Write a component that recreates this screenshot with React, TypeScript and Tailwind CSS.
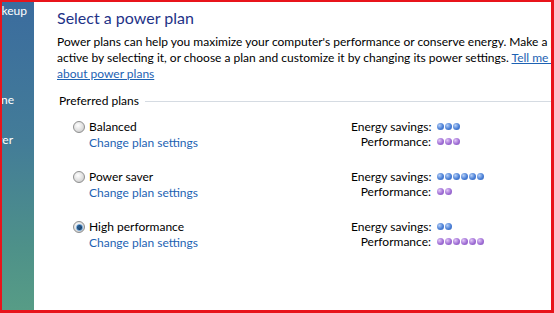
import React from 'react'

const font = { fontFamily: 'Lato, "Noto Sans", Arial, sans-serif' }

const plans = [
  { name: 'Balanced', energy: 3, perf: 3, selected: false },
  { name: 'Power saver', energy: 6, perf: 2, selected: false },
  { name: 'High performance', energy: 2, perf: 6, selected: true },
]

const Radio = ({ checked }: { checked: boolean }) => (
  <div className="w-[12px] h-[12px] rounded-full border border-[#8e8f8f] bg-[radial-gradient(circle_at_40%_35%,#ffffff,#dcdcdc_60%,#bdbdbd)] flex items-center justify-center shrink-0">
    {checked && (
      <div className="w-[7px] h-[7px] rounded-full border border-[#5b9ad6] bg-[radial-gradient(circle_at_40%_40%,#2c5f91,#0f2f52)]" />
    )}
  </div>
)

const Dots = ({ n, kind }: { n: number; kind: 'blue' | 'purple' }) => (
  <div className="flex gap-[1px] items-center ml-[6px]">
    {Array.from({ length: n }).map((_, i) => (
      <div
        key={i}
        className={
          kind === 'blue'
            ? 'w-[7px] h-[7px] rounded-full bg-[radial-gradient(circle_at_35%_35%,#b6d0f7,#4a7fd6_55%,#2f5fb5)]'
            : 'w-[7px] h-[7px] rounded-full bg-[radial-gradient(circle_at_35%_35%,#e2c8f7,#a06fd6_55%,#7c4cb5)]'
        }
      />
    ))}
  </div>
)

export default function App() {
  return (
    <div
      className="w-[554px] h-[313px] overflow-hidden flex bg-white border-[#e8141b] border-l-2 border-t-2 border-r-[3px] border-b-[3px] text-[12px] text-black"
      style={font}
    >
      {/* left task pane, mostly scrolled out of view */}
      <div className="w-[32px] shrink-0 h-full overflow-hidden bg-[linear-gradient(180deg,#3b6c9e_0%,#437c98_45%,#4e9189_80%,#579c86_100%)] text-white flex flex-col items-end">
        <div className="whitespace-nowrap mr-[7px] mt-[1px] leading-[16px]">Require a password on wakeup</div>
        <div className="whitespace-nowrap mr-[20px] mt-[73px] leading-[16px]">Change the time zone</div>
        <div className="whitespace-nowrap mr-[21px] mt-[24px] leading-[16px]">Battery power saver</div>
      </div>

      <div className="flex-1 min-w-0 pl-[23px] overflow-hidden">
        <h1 className="text-[16px] leading-[24px] text-[#1e3287] mt-[4px] whitespace-nowrap">Select a power plan</h1>
        <p className="mt-[4px] leading-[16px] whitespace-nowrap">
          Power plans can help you maximize your computer's performance or conserve energy. Make a plan
          <br />
          active by selecting it, or choose a plan and customize it by changing its power settings.{' '}
          <span className="text-[#1d62b3] underline">Tell me more</span>
          <br />
          <span className="text-[#1d62b3] underline">about power plans</span>
        </p>

        <div className="mt-[11px] ml-[2px] flex items-center gap-[6px] leading-[16px]">
          <span className="whitespace-nowrap">Preferred plans</span>
          <div className="flex-1 h-px bg-[#d5dbe2]" />
        </div>

        <div className="mt-[10px] ml-[16px] flex flex-col gap-[18px]">
          {plans.map((p) => (
            <div key={p.name} className="flex">
              <div className="w-[278px] shrink-0">
                <div className="flex items-center gap-[4px] leading-[16px]">
                  <Radio checked={p.selected} />
                  <span>{p.name}</span>
                </div>
                <div className="ml-[16px] leading-[16px] text-[#1d62b3]">Change plan settings</div>
              </div>
              <div className="flex flex-col leading-[15px]">
                <div className="flex items-center">
                  <span className="w-[80px] text-right whitespace-nowrap">Energy savings:</span>
                  <Dots n={p.energy} kind="blue" />
                </div>
                <div className="flex items-center">
                  <span className="w-[80px] text-right whitespace-nowrap">Performance:</span>
                  <Dots n={p.perf} kind="purple" />
                </div>
              </div>
            </div>
          ))}
        </div>
      </div>
    </div>
  )
}
